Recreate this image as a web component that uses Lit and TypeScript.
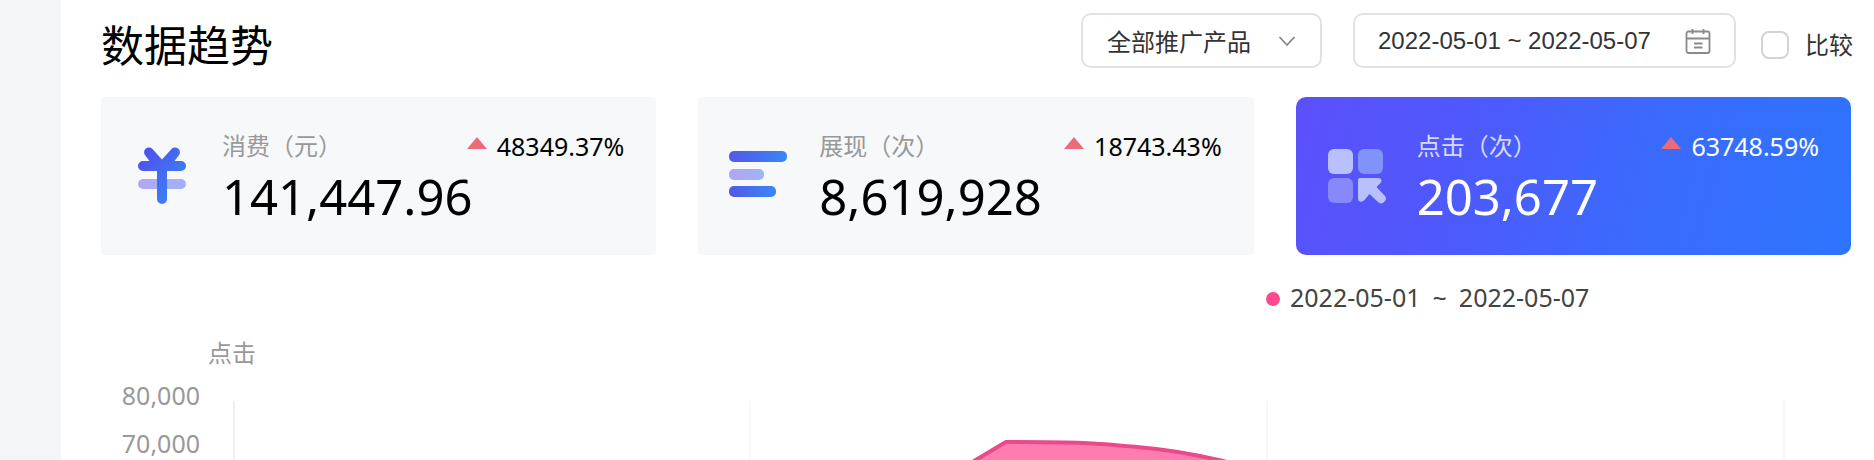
import { LitElement, html, css, svg } from "lit";
import { customElement, property, state } from "lit/decorators.js";
import { classMap } from "lit/directives/class-map.js";

interface Metric {
  id: string;
  label: string;
  value: string;
  change: string;
}

const METRICS: Metric[] = [
  { id: "cost", label: "消费（元）", value: "141,447.96", change: "48349.37%" },
  { id: "views", label: "展现（次）", value: "8,619,928", change: "18743.43%" },
  { id: "clicks", label: "点击（次）", value: "203,677", change: "63748.59%" },
];

const icons: Record<string, unknown> = {
  cost: svg`
    <defs>
      <linearGradient id="g" x1="0" y1="0" x2="1" y2="1">
        <stop offset="0" stop-color="#5249ee" /><stop offset="1" stop-color="#3490f4" />
      </linearGradient>
      <linearGradient id="p" x1="0" y1="0" x2="1" y2="0">
        <stop offset="0" stop-color="#b3a6f4" /><stop offset="1" stop-color="#9fb2fa" />
      </linearGradient>
    </defs>
    <rect x="7" y="34" width="48" height="10" rx="5" fill="url(#p)" />
    <path fill="url(#g)" d="M12 16h6.500l-4-5.200a4.900 4.900 0 0 1 7-6.900L31 14.500l9.500-10.600a4.900 4.900 0 0 1 7 6.900l-4 5.200H50a5 5 0 0 1 0 10H36v28a5 5 0 0 1-10 0V26H12a5 5 0 0 1 0-10z" />`,
  views: svg`
    <defs>
      <linearGradient id="g" x1="0" y1="0" x2="1" y2="0">
        <stop offset="0" stop-color="#5159e6" /><stop offset="1" stop-color="#3a86f7" />
      </linearGradient>
      <linearGradient id="p" x1="0" y1="0" x2="1" y2="0">
        <stop offset="0" stop-color="#b0a6f0" /><stop offset="1" stop-color="#9db4fb" />
      </linearGradient>
    </defs>
    <rect x="1" y="6" width="58" height="11" rx="5" fill="url(#g)" />
    <rect x="1" y="24" width="35" height="11" rx="5" fill="url(#p)" />
    <rect x="1" y="41" width="47" height="11" rx="5" fill="url(#g)" />`,
  clicks: svg`
    <rect x="2" y="4" width="25" height="25" rx="6" fill="#b9c0ff" />
    <rect x="32" y="4" width="25" height="25" rx="6" fill="#7f93fa" />
    <rect x="2" y="33" width="25" height="25" rx="6" fill="#8789fb" />
    <path fill="#b9c0ff" d="M34 33h18c3.500 0 4.500 3 2.500 5l-4 4 8 8.500a4.600 4.600 0 0 1-6.500 6.500l-8.500-8-5.500 6.500c-2 2-6 1.500-6-2V35a2 2 0 0 1 2-2z" />`,
};

@customElement("metric-card")
class MetricCard extends LitElement {
  @property({ attribute: false }) metric!: Metric;
  @property({ type: Boolean }) active = false;

  static styles = css`
    :host { display: block; }
    .card {
      width: 100%;
      box-sizing: border-box;
      display: flex;
      align-items: flex-start;
      gap: 31px;
      padding: 31px 32px 29px 30px;
      border: 0;
      border-radius: 4px;
      background: #f7f8f9;
      color: #000;
      font: inherit;
      text-align: left;
      cursor: pointer;
    }
    .card.active {
      border-radius: 10px;
      color: #fff;
      background: linear-gradient(105deg, #5b50fb 0%, #5058fc 28%, #3b6afc 62%, #2d74fd 100%);
    }
    .icon { width: 60px; height: 60px; flex: none; margin-top: 17px; }
    .body { flex: 1; min-width: 0; }
    .top { display: flex; justify-content: space-between; align-items: center; line-height: 36px; }
    .label { font-size: 24px; color: #999; }
    .active .label { color: #d5dbff; }
    .change { display: flex; align-items: center; gap: 10px; font-size: 25px; }
    .up { width: 20px; height: 12px; flex: none; margin-bottom: 6px; }
    .value { display: block; padding-top: 2px; font-size: 49px; line-height: 60px; }
  `;

  render() {
    const m = this.metric;
    return html`
      <button class=${classMap({ card: true, active: this.active })} aria-pressed=${this.active}>
        <svg class="icon" viewBox="0 0 60 60" aria-hidden="true">${icons[m.id]}</svg>
        <span class="body">
          <span class="top">
            <span class="label">${m.label}</span>
            <span class="change">
              <svg class="up" viewBox="0 0 20 12" aria-hidden="true"><path d="M10 0l10 12H0z" fill="#ed6b78" /></svg>
              ${m.change}
            </span>
          </span>
          <span class="value">${m.value}</span>
        </span>
      </button>
    `;
  }
}

@customElement("trend-chart")
class TrendChart extends LitElement {
  static styles = css`
    :host { display: block; }
    .legend {
      display: flex;
      align-items: center;
      gap: 10px;
      margin-left: calc(66% + 10px);
      font-size: 25px;
      line-height: 36px;
      color: #444;
    }
    .dot { width: 14px; height: 14px; border-radius: 50%; background: #fb4a8d; margin-top: 4px; }
    .range { display: flex; gap: 12px; }
    .unit { margin: 20px 0 0 107px; font-size: 24px; line-height: 36px; color: #999; }
    .plot { display: flex; gap: 33px; }
    .axis {
      width: 99px;
      margin: 0;
      padding: 0;
      list-style: none;
      text-align: right;
      font-size: 25px;
      line-height: 48px;
      color: #999;
    }
    .canvas { flex: 1; min-width: 0; margin-top: 30px; }
    .canvas svg { display: block; width: 100%; height: 240px; }
    .first { stroke: #eeeff0; }
    .grid { stroke: #f8f8f9; }
    line { stroke-width: 2px; vector-effect: non-scaling-stroke; }
    .area { fill: #ff7cb0; }
    .curve { fill: none; stroke: #ea4a8a; stroke-width: 4px; stroke-linejoin: round; vector-effect: non-scaling-stroke; }
  `;

  render() {
    const curve = "M517 240L741 60L773 41C850 41 860 42 904 46C940 49 965 54 990 60C1180 108 1290 150 1551 190";
    return html`
      <div class="legend">
        <span class="dot"></span>
        <span class="range"><span>2022-05-01</span><span>~</span><span>2022-05-07</span></span>
      </div>
      <div class="unit">点击</div>
      <div class="plot">
        <ul class="axis"><li>80,000</li><li>70,000</li></ul>
        <div class="canvas">
          <svg viewBox="0 0 1618 240" preserveAspectRatio="none" role="img" aria-label="点击">
            <line class="first" x1="1" x2="1" y1="0" y2="240" />
            ${[517, 1034, 1551].map((x) => svg`<line class="grid" x1=${x} x2=${x} y1="0" y2="240" />`)}
            <path class="area" d="${curve}V240z" />
            <path class="curve" d=${curve} />
          </svg>
        </div>
      </div>
    `;
  }
}

@customElement("app-root")
class AppRoot extends LitElement {
  @state() private active = "clicks";

  static styles = css`
    :host {
      display: block;
      height: 100vh;
      box-sizing: border-box;
      overflow: hidden;
      padding-left: 61px;
      background: #f4f5f8;
      font-family: "Noto Sans", "Noto Sans CJK SC", sans-serif;
    }
    .panel { min-height: 100%; box-sizing: border-box; background: #fff; padding: 13px 23px 0 40px; }
    .head { display: flex; align-items: flex-start; }
    .title {
      margin: 0 auto 0 0;
      font: 400 43px/60px "Noto Sans CJK SC", sans-serif;
      color: #000;
    }
    .field {
      box-sizing: border-box;
      height: 55px;
      display: flex;
      align-items: center;
      border: 2px solid #e2e2e2;
      border-radius: 10px;
      color: #333;
    }
    .product { width: 241px; margin-right: 31px; padding: 0 24px; }
    .product select {
      appearance: none;
      flex: 1;
      min-width: 0;
      padding: 0;
      border: 0;
      background: none;
      color: inherit;
      font: 24px/36px "Noto Sans CJK SC", sans-serif;
    }
    .chev { width: 18px; height: 12px; flex: none; }
    .dates { width: 383px; margin-right: 25px; padding: 0 23px; }
    .dates input {
      flex: 1;
      min-width: 0;
      padding: 0;
      border: 0;
      background: none;
      color: inherit;
      font: 24px/36px "Liberation Sans", sans-serif;
    }
    .cal { width: 26px; height: 26px; flex: none; }
    .compare {
      display: flex;
      align-items: center;
      gap: 16px;
      margin: 14px -2px 0 0;
      font-size: 24px;
      line-height: 36px;
      color: #333;
    }
    .compare input {
      appearance: none;
      box-sizing: border-box;
      width: 28px;
      height: 28px;
      margin: 0;
      border: 2px solid #d3d3d3;
      border-radius: 8px;
      background: #fff;
    }
    .compare input:checked { background: #4b5cfc; border-color: #4b5cfc; }
    .cards { display: grid; grid-template-columns: repeat(3, 1fr); gap: 42px; margin-top: 24px; }
    .chart { margin-top: 24px; }
  `;

  render() {
    return html`
      <main class="panel">
        <header class="head">
          <h1 class="title">数据趋势</h1>
          <div class="field product">
            <select aria-label="推广产品"><option>全部推广产品</option></select>
            <svg class="chev" viewBox="0 0 18 12" aria-hidden="true"><path d="M1.500 2L9 10l7.500-8" fill="none" stroke="#888" stroke-width="1.800" /></svg>
          </div>
          <div class="field dates">
            <input type="text" aria-label="日期" value="2022-05-01 ~ 2022-05-07" />
            <svg class="cal" viewBox="0 0 26 26" aria-hidden="true" fill="none" stroke="#8a8a8a" stroke-width="1.800">
              <rect x="1.500" y="3.500" width="23" height="21.500" rx="2" />
              <path d="M1.500 10.500h23M7.500 1v5M18.500 1v5M9 15.500h8.500M9 19.500h8.500" />
            </svg>
          </div>
          <label class="compare"><input type="checkbox" />比较</label>
        </header>
        <section class="cards">
          ${METRICS.map(
            (m) => html`<metric-card .metric=${m} ?active=${this.active === m.id} @click=${() => (this.active = m.id)}></metric-card>`,
          )}
        </section>
        <trend-chart class="chart"></trend-chart>
      </main>
    `;
  }
}
